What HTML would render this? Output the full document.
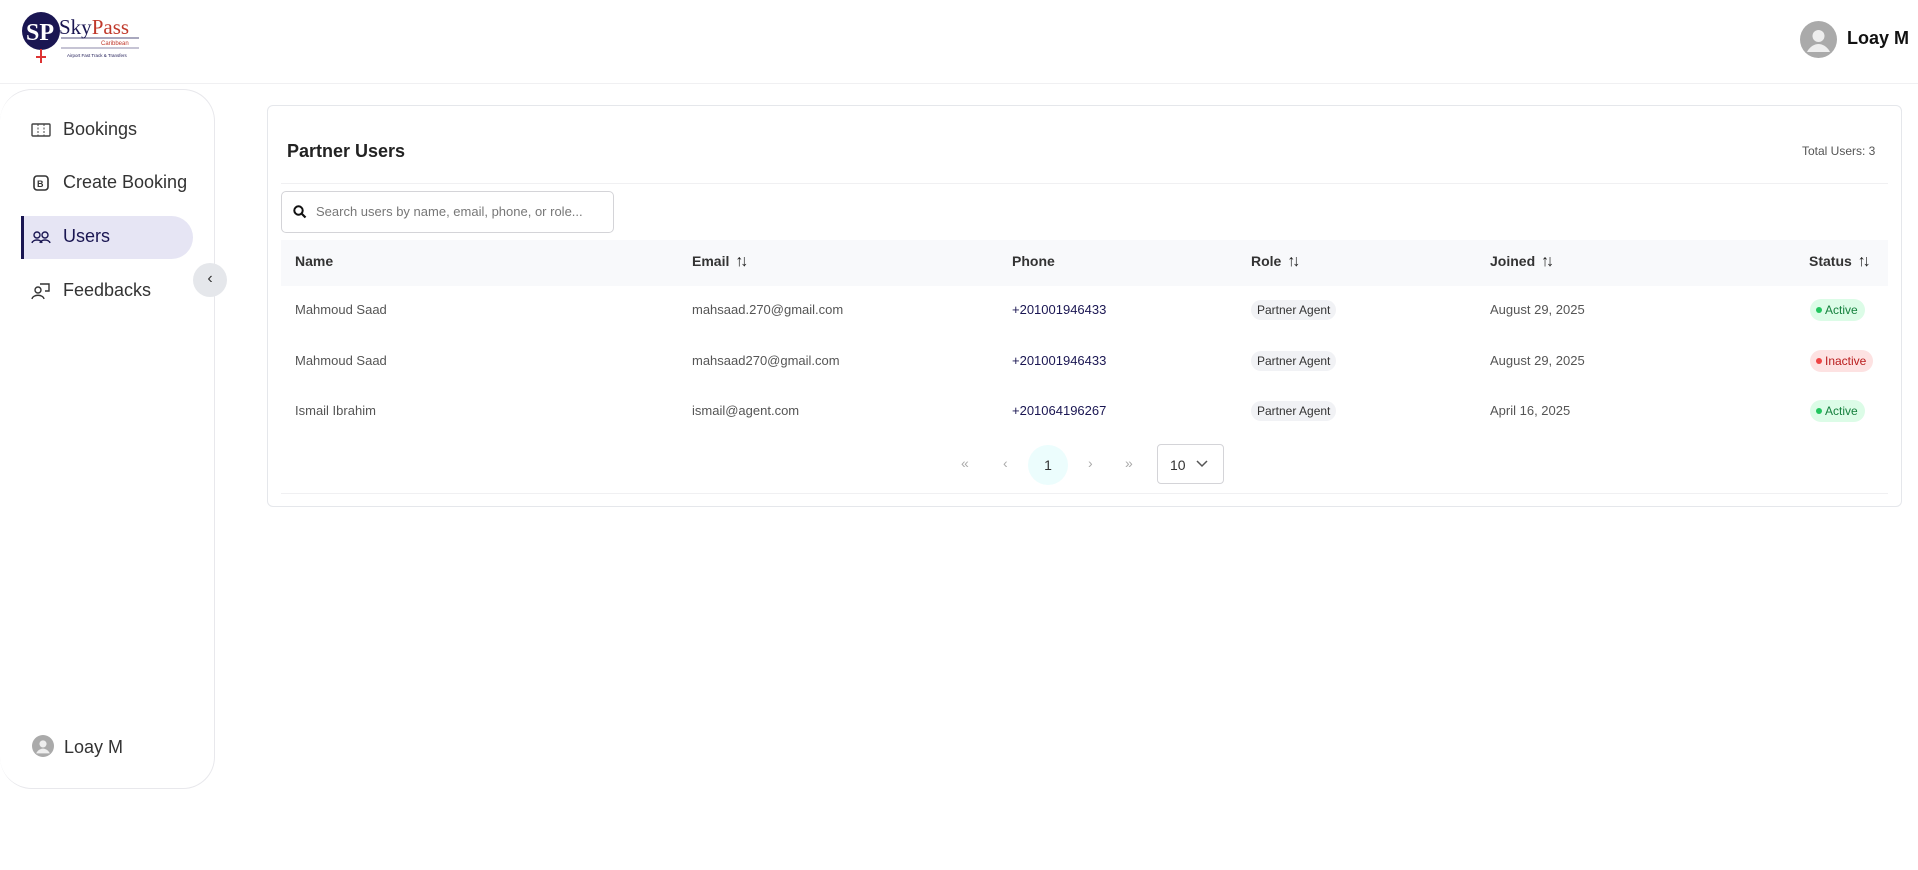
<!DOCTYPE html>
<html><head><meta charset="utf-8"><style>
*{box-sizing:border-box;margin:0;padding:0}
body{width:1918px;height:870px;background:#fff;font-family:"Liberation Sans",sans-serif;color:#1f2937;position:relative;overflow:hidden}
.abs{position:absolute}
.hdr{left:0;top:0;width:1918px;height:84px;border-bottom:1px solid #f0f0f2}
.side{left:0;top:89px;width:215px;height:700px;border:1px solid #e8e8ec;border-radius:32px;border-left:none}
.nav{position:absolute;left:31px;font-size:18px;color:#333;display:flex;align-items:center;gap:12px}
.active{left:21px;top:216px;width:172px;height:43px;background:#e6e5f4;border-radius:0 22px 22px 0;border-left:3px solid #1a1652}
.card{left:267px;top:105px;width:1635px;height:402px;border:1px solid #e5e7eb;border-radius:6px}
.th{position:absolute;top:253px;font-size:14px;font-weight:bold;color:#333}
.td{position:absolute;font-size:13px;color:#555}
.pill{position:absolute;font-size:12px;background:#f1f2f5;border-radius:10px;padding:3px 6px;color:#333}
.st{position:absolute;font-size:12px;border-radius:11px;padding:4px 7px 4px 6px}
.ok{background:#dcfce7;color:#15803d}.no{background:#fde2e2;color:#b91c1c}
.dot{display:inline-block;width:6px;height:6px;border-radius:50%;margin-right:3px;vertical-align:1px}
.arr{font-size:16px;font-weight:bold;margin-left:6px;letter-spacing:-3px;color:#222}
.pg{position:absolute;top:455px;font-size:14px;color:#aaa}
</style></head><body>
<div class="abs hdr"></div>
<svg class="abs" style="left:21px;top:12px" width="122" height="54" viewBox="0 0 122 54">
<circle cx="20" cy="19" r="19" fill="#1a1652"/>
<text x="5" y="28" font-size="24" font-family="Liberation Serif" fill="#fff" font-weight="bold">SP</text>
<path d="M20 37v14M15 45h10" stroke="#d33" stroke-width="2"/>
<text x="38" y="22" font-family="Liberation Serif" font-size="21" fill="#1a1652">Sky<tspan fill="#c0392b">Pass</tspan></text>
<line x1="40" y1="26" x2="118" y2="26" stroke="#1a1652" stroke-width=".8"/>
<text x="80" y="33" font-size="6" fill="#c0392b">Caribbean</text>
<line x1="40" y1="36" x2="118" y2="36" stroke="#1a1652" stroke-width=".6"/>
<text x="46" y="45" font-size="4.5" fill="#1a1652">Airport Fast Track &amp; Transfers</text>
</svg>
<svg class="abs" style="left:1800px;top:21px" width="37" height="37" viewBox="0 0 37 37"><circle cx="18.5" cy="18.5" r="18.5" fill="#aaa"/><circle cx="18.5" cy="15" r="6" fill="#eee"/><path d="M7 31c3-6 8-8 11.5-8s8.5 2 11.5 8" fill="#eee"/></svg>
<div class="abs" style="left:1847px;top:28px;font-size:18px;font-weight:bold;color:#111">Loay M</div>

<div class="abs side"></div>
<div class="abs active"></div>
<div class="nav" style="top:119px"><svg width="20" height="14"><rect x="1" y="1" width="18" height="12" rx="1" fill="none" stroke="#444" stroke-width="1.4"/><path d="M7 1v12M13 1v12" stroke="#444" stroke-dasharray="2 1.5"/></svg>Bookings</div>
<div class="nav" style="top:172px"><svg width="20" height="18"><rect x="3" y="2" width="14" height="14" rx="3" fill="none" stroke="#333" stroke-width="1.6"/><text x="6" y="13" font-size="9" font-weight="bold" fill="#333">B</text></svg>Create Booking</div>
<div class="nav" style="top:226px;color:#1a1652"><svg width="20" height="14"><circle cx="6" cy="5" r="3" fill="none" stroke="#1a1652" stroke-width="1.4"/><circle cx="14" cy="5" r="3" fill="none" stroke="#1a1652" stroke-width="1.4"/><path d="M1 13c1-4 9-4 10 0M9 13c1-4 9-4 10 0" fill="none" stroke="#1a1652" stroke-width="1.4"/></svg>Users</div>
<div class="nav" style="top:280px"><svg width="20" height="18"><circle cx="7" cy="8" r="3" fill="none" stroke="#333" stroke-width="1.4"/><path d="M1 17c1-5 11-5 12 0M9 2h9v7h-4" fill="none" stroke="#333" stroke-width="1.4"/></svg>Feedbacks</div>
<div class="abs" style="left:193px;top:263px;width:34px;height:34px;border-radius:50%;background:#e5e7eb;text-align:center;line-height:32px;color:#333;font-size:16px">‹</div>
<svg class="abs" style="left:32px;top:735px" width="22" height="22" viewBox="0 0 37 37"><circle cx="18.5" cy="18.5" r="18.5" fill="#aaa"/><circle cx="18.5" cy="15" r="6" fill="#eee"/><path d="M7 31c3-6 8-8 11.5-8s8.5 2 11.5 8" fill="#eee"/></svg>
<div class="abs" style="left:64px;top:737px;font-size:18px;color:#333">Loay M</div>

<div class="abs card"></div>
<div class="abs" style="left:287px;top:141px;font-size:18px;font-weight:bold;color:#222">Partner Users</div>
<div class="abs" style="left:1802px;top:144px;font-size:12px;color:#555">Total Users: 3</div>
<div class="abs" style="left:281px;top:183px;width:1607px;height:1px;background:#f0f0f2"></div>
<div class="abs" style="left:281px;top:191px;width:333px;height:42px;border:1px solid #d4d4d8;border-radius:5px"></div>
<svg class="abs" style="left:293px;top:205px" width="14" height="14"><circle cx="5.5" cy="5.5" r="4.2" fill="none" stroke="#111" stroke-width="2"/><path d="M8.5 8.5l4 4" stroke="#111" stroke-width="2.2"/></svg>
<div class="abs" style="left:316px;top:204px;font-size:13px;color:#777">Search users by name, email, phone, or role...</div>
<div class="abs" style="left:281px;top:240px;width:1607px;height:46px;background:#f8f9fb"></div>
<div class="th" style="left:295px">Name</div>
<div class="th" style="left:692px">Email<span class="arr">↑↓</span></div>
<div class="th" style="left:1012px">Phone</div>
<div class="th" style="left:1251px">Role<span class="arr">↑↓</span></div>
<div class="th" style="left:1490px">Joined<span class="arr">↑↓</span></div>
<div class="th" style="left:1809px">Status<span class="arr">↑↓</span></div>

<div class="td" style="left:295px;top:302px">Mahmoud Saad</div>
<div class="td" style="left:692px;top:302px">mahsaad.270@gmail.com</div>
<div class="td" style="left:1012px;top:302px;color:#1a1652">+201001946433</div>
<div class="pill" style="left:1251px;top:300px">Partner Agent</div>
<div class="td" style="left:1490px;top:302px">August 29, 2025</div>
<div class="st ok" style="left:1810px;top:299px"><span class="dot" style="background:#22c55e"></span>Active</div>

<div class="td" style="left:295px;top:353px">Mahmoud Saad</div>
<div class="td" style="left:692px;top:353px">mahsaad270@gmail.com</div>
<div class="td" style="left:1012px;top:353px;color:#1a1652">+201001946433</div>
<div class="pill" style="left:1251px;top:351px">Partner Agent</div>
<div class="td" style="left:1490px;top:353px">August 29, 2025</div>
<div class="st no" style="left:1810px;top:350px"><span class="dot" style="background:#ef4444"></span>Inactive</div>

<div class="td" style="left:295px;top:403px">Ismail Ibrahim</div>
<div class="td" style="left:692px;top:403px">ismail@agent.com</div>
<div class="td" style="left:1012px;top:403px;color:#1a1652">+201064196267</div>
<div class="pill" style="left:1251px;top:401px">Partner Agent</div>
<div class="td" style="left:1490px;top:403px">April 16, 2025</div>
<div class="st ok" style="left:1810px;top:400px"><span class="dot" style="background:#22c55e"></span>Active</div>

<div class="pg" style="left:961px">«</div>
<div class="pg" style="left:1003px">‹</div>
<div class="abs" style="left:1028px;top:445px;width:40px;height:40px;border-radius:50%;background:#ecfdfd;text-align:center;line-height:40px;font-size:14px;color:#333">1</div>
<div class="pg" style="left:1088px">›</div>
<div class="pg" style="left:1125px">»</div>
<div class="abs" style="left:1157px;top:444px;width:67px;height:40px;border:1px solid #d4d4d8;border-radius:4px;font-size:14px;color:#333;padding:12px 0 0 12px">10</div>
<svg class="abs" style="left:1195px;top:459px" width="14" height="10"><path d="M2 2l5 5 5-5" fill="none" stroke="#555" stroke-width="1.5"/></svg>
<div class="abs" style="left:281px;top:493px;width:1607px;height:1px;background:#f0f0f2"></div>
</body></html>
